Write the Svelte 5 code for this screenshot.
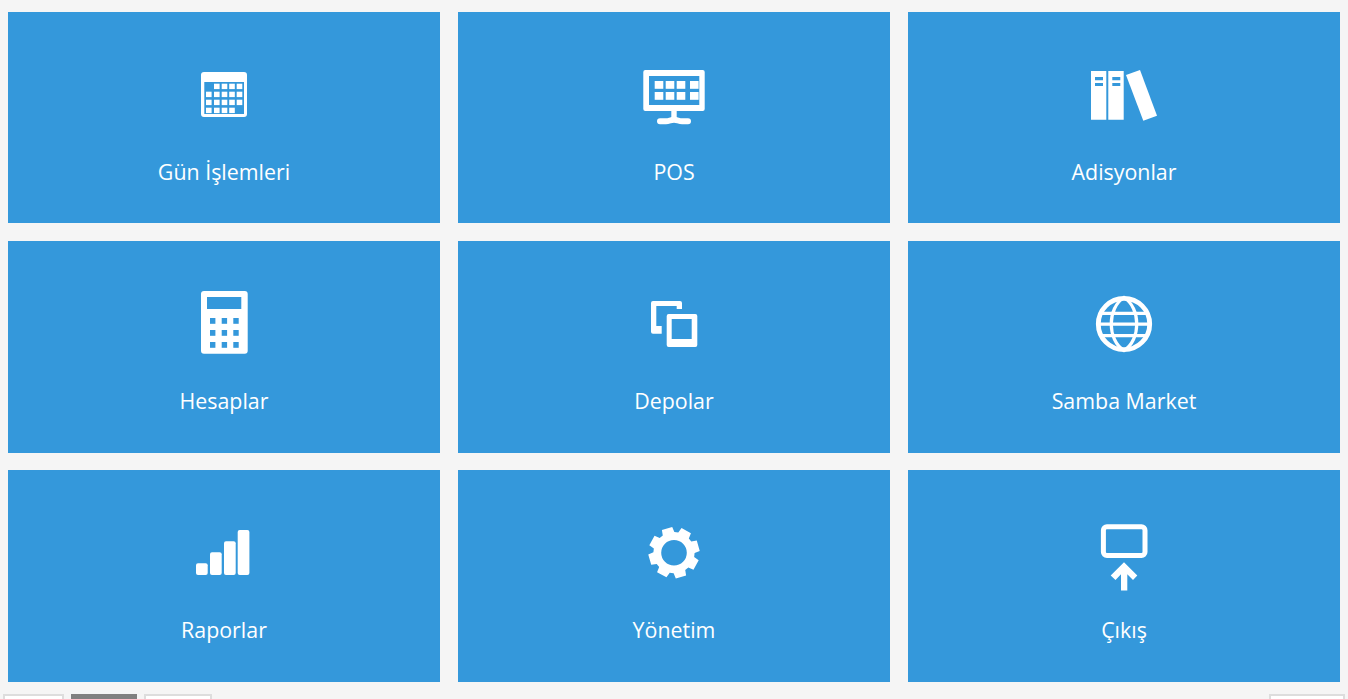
<script>
  const gear = (() => {
    const cx = 674, cy = 552.7;
    const pts = [];
    const p = (r, deg) => {
      const a = (deg * Math.PI) / 180;
      return `${(cx + r * Math.sin(a)).toFixed(2)},${(cy - r * Math.cos(a)).toFixed(2)}`;
    };
    for (let i = 0; i < 8; i++) {
      const c = -16 + i * 45;
      pts.push(p(20.6, c - 17), p(25.8, c - 12), p(25.8, c + 12), p(20.6, c + 17));
    }
    return 'M' + pts.join('L') + 'Z';
  })();

  const calendar = [];
  const calX = [206, 214, 221.7, 229.2, 236.7];
  const calY = [83.7, 91.7, 99.7, 107.7];
  calY.forEach((y, r) =>
    calX.forEach((x, c) => {
      if ((r === 0 && c === 0) || (r === 3 && c === 4)) return;
      calendar.push([x, y]);
    })
  );
  const keysX = [654.7, 665.7, 676.7, 690];
  const keysY = [81, 92];
  const calcX = [210, 221.7, 233.3];
  const calcY = [318, 330, 342];
</script>

<div class="page">
  <main class="grid">
    <button class="tile">
      <svg class="icon" viewBox="174 50 100 90" aria-hidden="true">
        <path class="w" fill-rule="evenodd" d="M204 72h40a3 3 0 0 1 3 3v39a3 3 0 0 1-3 3h-40a3 3 0 0 1-3-3V75a3 3 0 0 1 3-3ZM204.3 82v32H244V82Z" />
        {#each calendar as [x, y]}<rect class="w" {x} {y} width="5.6" height="5.4" />{/each}
      </svg>
      <span class="label">Gün İşlemleri</span>
    </button>

    <button class="tile">
      <svg class="icon" viewBox="624 50 100 90" aria-hidden="true">
        <path class="w" fill-rule="evenodd" d="M645.3 70h57.4a2 2 0 0 1 2 2v37a2 2 0 0 1-2 2h-57.4a2 2 0 0 1-2-2V72a2 2 0 0 1 2-2ZM649 76v29h50.3V76Z" />
        {#each keysY as y}{#each keysX as x}<rect class="w" {x} {y} width="8.6" height="7.8" />{/each}{/each}
        <rect class="w" x="671.3" y="110" width="5.4" height="10" />
        <path class="line" d="M660 121.3h6c3 0 5-1.6 8-1.6s5 1.6 8 1.6h6" />
      </svg>
      <span class="label">POS</span>
    </button>

    <button class="tile">
      <svg class="icon" viewBox="1074 50 100 90" aria-hidden="true">
        <path class="w" fill-rule="evenodd" d="M1091 71h15.3v48.7H1091ZM1095 77v3.3h8V77ZM1095 83v3h8v-3Z" />
        <path class="w" fill-rule="evenodd" d="M1108.3 71h15.4v48.7h-15.4ZM1112.3 77v3.3h8V77ZM1112.3 83v3h8v-3Z" />
        <polygon class="w" points="1126,75 1140,70 1157,115.7 1143.3,120.7" />
      </svg>
      <span class="label">Adisyonlar</span>
    </button>

    <button class="tile">
      <svg class="icon" viewBox="174 279 100 90" aria-hidden="true">
        <path class="w" fill-rule="evenodd" d="M204 291h40.7a3 3 0 0 1 3 3v56.7a3 3 0 0 1-3 3H204a3 3 0 0 1-3-3V294a3 3 0 0 1 3-3ZM207 297v12h34.3v-12Z" />
        {#each calcY as y}{#each calcX as x}<rect class="b" {x} {y} width="5.4" height="5.8" />{/each}{/each}
      </svg>
      <span class="label">Hesaplar</span>
    </button>

    <button class="tile">
      <svg class="icon" viewBox="624 279 100 90" aria-hidden="true">
        <path class="w" d="M653 301h27a2 2 0 0 1 2 2v6h-5.3v-3h-20.4v20h5.4v7.7H653a2 2 0 0 1-2-2V303a2 2 0 0 1 2-2Z" />
        <path class="w" fill-rule="evenodd" d="M668.7 314h26.6a2 2 0 0 1 2 2v29a2 2 0 0 1-2 2h-26.6a2 2 0 0 1-2-2v-29a2 2 0 0 1 2-2ZM671.7 319v20h20v-20Z" />
      </svg>
      <span class="label">Depolar</span>
    </button>

    <button class="tile">
      <svg class="icon" viewBox="1074 279 100 90" aria-hidden="true">
        <g class="globe">
          <circle cx="1124" cy="324" r="25.7" />
          <path d="M1124 297.5C1107 308 1107 340 1124 350.5C1141 340 1141 308 1124 297.5Z" />
          <path d="M1098 324.2h52M1102 313.3h44M1102 335.6h44" />
        </g>
      </svg>
      <span class="label">Samba Market</span>
    </button>

    <button class="tile">
      <svg class="icon" viewBox="174 508 100 90" aria-hidden="true">
        <rect class="w" x="196" y="563.3" width="11.7" height="11.7" rx="2" />
        <rect class="w" x="210" y="552.3" width="11.7" height="22.7" rx="2" />
        <rect class="w" x="224" y="541.3" width="11.7" height="33.7" rx="2" />
        <rect class="w" x="237.7" y="530" width="11.7" height="45" rx="2" />
      </svg>
      <span class="label">Raporlar</span>
    </button>

    <button class="tile">
      <svg class="icon" viewBox="624 508 100 90" aria-hidden="true">
        <path class="w" fill-rule="evenodd" d={gear + 'M686.8 552.7a12.8 12.8 0 1 0-25.6 0a12.8 12.8 0 1 0 25.6 0Z'} />
      </svg>
      <span class="label">Yönetim</span>
    </button>

    <button class="tile">
      <svg class="icon" viewBox="1074 508 100 90" aria-hidden="true">
        <rect class="frame" x="1103.4" y="526.8" width="41.6" height="28.8" rx="3.5" />
        <polygon class="w" points="1124,562.3 1137.3,575.5 1133,580 1127.3,574.3 1127.3,590.5 1121,590.5 1121,574.3 1115.5,580 1110.7,575.5" />
      </svg>
      <span class="label">Çıkış</span>
    </button>
  </main>

  <footer class="pager">
    <div class="group">
      <button class="page-btn first"></button>
      <button class="page-btn current"></button>
      <button class="page-btn third"></button>
    </div>
    <button class="page-btn last"></button>
  </footer>
</div>

<style>
  :global(body) {
    margin: 0;
    background: #f5f5f5;
    font-family: "Open Sans", "Noto Sans", sans-serif;
  }
  .page {
    height: 699px;
    overflow: hidden;
    box-sizing: border-box;
    padding: 12px 8px 0;
  }
  .grid {
    display: grid;
    grid-template-columns: repeat(3, 432px);
    grid-template-rows: repeat(3, 212px);
    column-gap: 18px;
    row-gap: 17px;
    height: 670px;
  }
  .tile {
    display: flex;
    flex-direction: column;
    align-items: center;
    border: 0;
    margin: 0;
    padding: 38px 0 0;
    background: #3498db;
    color: #fff;
    font: inherit;
  }
  .tile:nth-child(-n + 3) {
    align-self: start;
    height: 211px;
  }
  .icon {
    display: block;
    width: 100px;
    height: 90px;
    flex: none;
  }
  .label {
    margin-top: 17px;
    font-size: 21.4px;
    line-height: 30px;
  }
  .w { fill: #fff; }
  .b { fill: #3498db; }
  .line {
    fill: none;
    stroke: #fff;
    stroke-width: 6;
    stroke-linecap: round;
    stroke-linejoin: round;
  }
  .globe * {
    fill: none;
    stroke: #fff;
    stroke-width: 3.2;
  }
  .globe circle { stroke-width: 4.8; }
  .frame {
    fill: none;
    stroke: #fff;
    stroke-width: 5;
  }
  .pager {
    display: flex;
    justify-content: space-between;
    margin-top: 12px;
    margin-left: -5px;
    margin-right: -5px;
  }
  .group {
    display: flex;
    gap: 7px;
  }
  .page-btn {
    height: 40px;
    padding: 0;
    box-sizing: border-box;
    border: 2px solid #ddd;
    background: #fff;
  }
  .first { width: 61px; }
  .current { width: 66px; background: #808080; border-color: #808080; }
  .third { width: 68px; }
  .last { width: 76px; }
</style>
